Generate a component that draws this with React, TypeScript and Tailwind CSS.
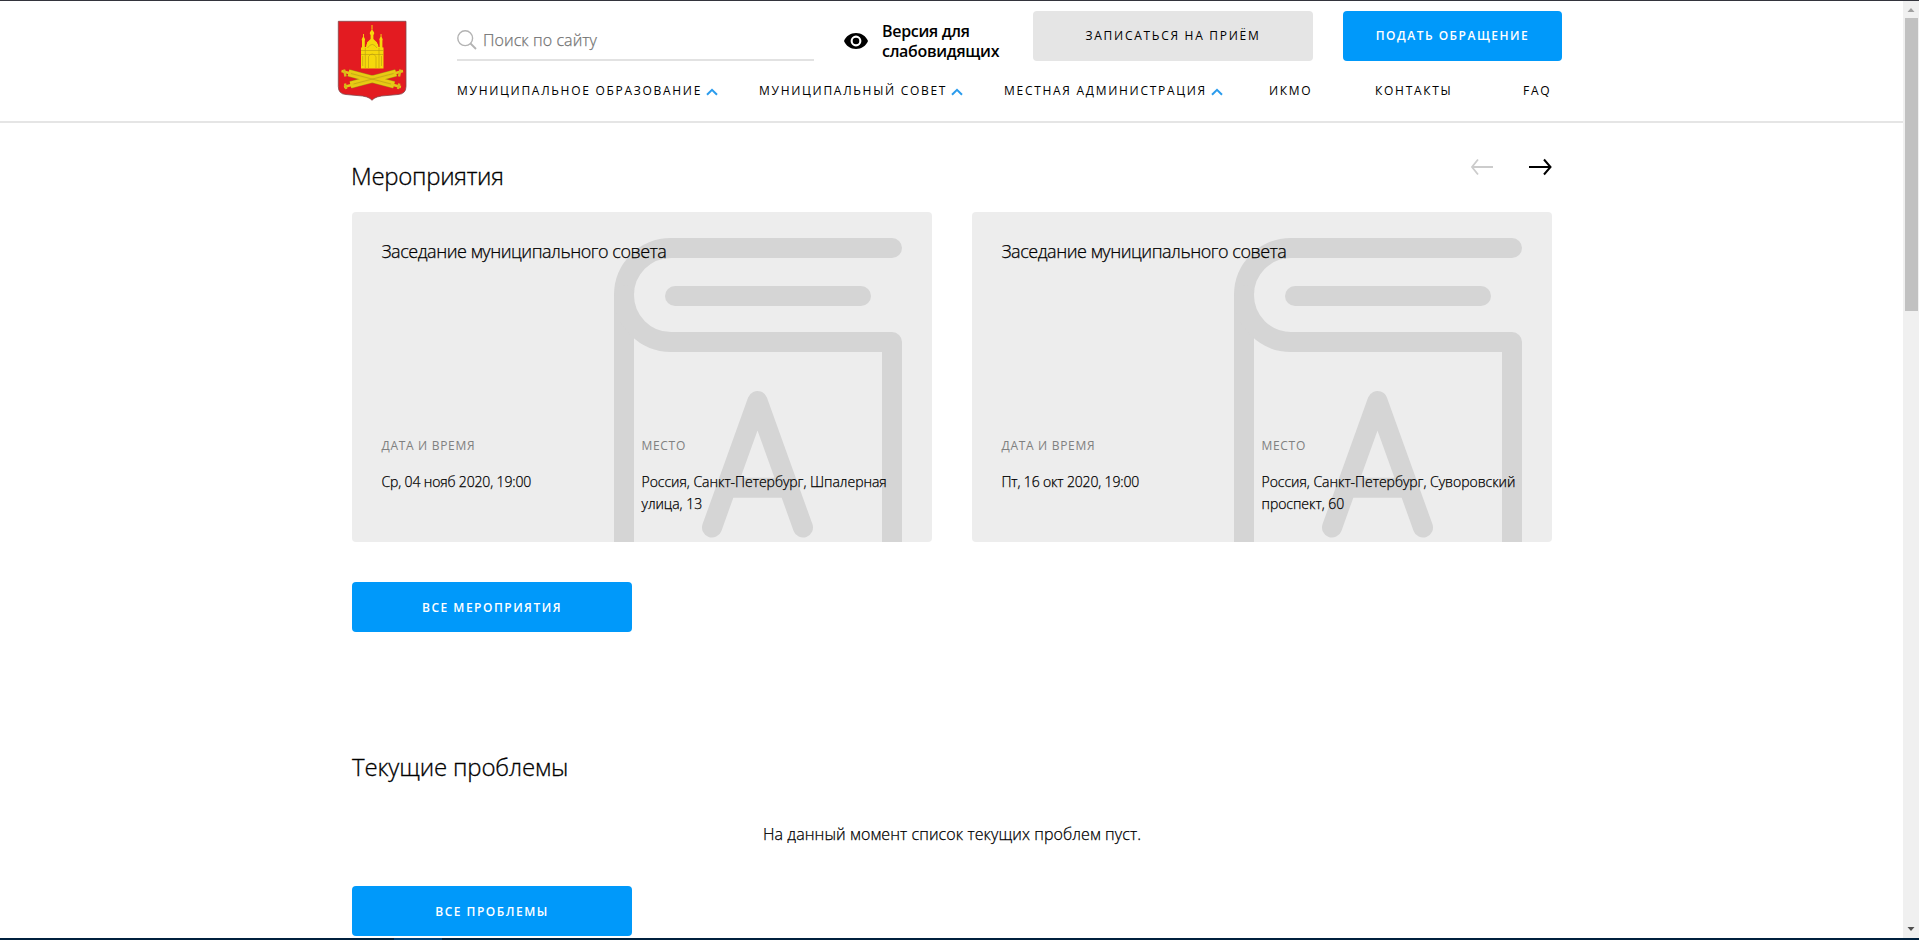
import React from "react";

function Emblem() {
  return (
    <svg width="70" height="82" viewBox="0 0 70 82" className="block">
      <path
        d="M1.3 1.3H69V66.5Q69 74 61 74.5L50 75.5Q38 76 35 80.3Q32 76 20 75.5L9 74.5Q1.3 74 1.3 66.5Z"
        fill="#e31b21"
        stroke="#84474c"
        strokeWidth="0.8"
      />
      <g fill="#f6d80c">
        <path d="M34.5 5h1v4h-1zM26 14h.9v4H26zM43.6 14h.9v4h-.9z" />
        <path d="M35 8.5Q35.6 10.8 37 12Q37.7 13.8 36.4 15V19L40 22.5V25H30V22.5L33.6 19V15Q32.3 13.8 33 12Q34.4 10.8 35 8.5Z" />
        <path d="M26.4 16.6Q28.8 19.3 27.8 20.8V28H25V20.8Q24 19.3 26.4 16.6ZM44 16.6Q46.4 19.3 45.4 20.8V28H42.6V20.8Q41.6 19.3 44 16.6Z" />
        <path d="M29 27Q29.5 21 35.2 20.5Q41 21 41.5 27L46.5 27.5V48.5H24V27.5Z" />
      </g>
      <g fill="none" stroke="#b89c12" strokeWidth="0.6">
        <path d="M24 30.5H46.5M24 34.5H46.5M28.3 28V48M42 28V48M31.5 48V36.5Q35.2 31.5 39 36.5V48M30.5 28Q35.2 20.8 40 28M25.7 36V46M44.5 36V46" />
      </g>
      <g>
        <path d="M11.5 52.8L57 64.8M59 52.8L13.5 64.8" stroke="#a88d16" strokeWidth="7.6" />
        <path d="M11.5 52.8L57 64.8M59 52.8L13.5 64.8" stroke="#e9cb13" strokeWidth="6.4" />
        <path d="M4.5 51L64 67M66 51L7 67" stroke="#e4c616" strokeWidth="2.4" />
        <path d="M7 49.5L8.5 56.5M63.5 49.5L62 56.5M8 63.5L9.2 69M62.3 63.5L61 69" stroke="#d8b919" strokeWidth="2.4" />
        <path d="M14 53.5L54 64M56.5 53.5L16.5 64" stroke="#bda015" strokeWidth="0.7" />
      </g>
    </svg>
  );
}

function Chevron() {
  return (
    <svg width="12" height="8" viewBox="0 0 12 8" className="mt-[2px] block">
      <path d="M1 6.8L6 1.8L11 6.8" fill="none" stroke="#2b9ced" strokeWidth="2" />
    </svg>
  );
}

function BookArt() {
  return (
    <svg width="580" height="330" viewBox="0 0 580 330" className="absolute inset-0">
      <g fill="none" stroke="#d5d5d5" strokeWidth="20" strokeLinecap="round" strokeLinejoin="round">
        <path d="M540 36H319A47 47 0 0 0 272 83V345" />
        <path d="M272 83A47 47 0 0 0 319 130H540V345" />
        <path d="M323 84H509" />
        <path d="M360 315.5L405.5 189L451 315.5M375 275.7H436" />
      </g>
    </svg>
  );
}

type EventInfo = { date: string; place: string };

const events: EventInfo[] = [
  { date: "Ср, 04 нояб 2020, 19:00", place: "Россия, Санкт-Петербург, Шпалерная улица, 13" },
  { date: "Пт, 16 окт 2020, 19:00", place: "Россия, Санкт-Петербург, Суворовский проспект, 60" },
];

function EventField({ label, value, className }: { label: string; value: string; className: string }) {
  return (
    <div>
      <div className="text-[12px] leading-[18px] tracking-[0.7px] text-[#808080]">{label}</div>
      <div className={`mt-[16px] text-[14px] leading-[22px] font-light [-webkit-text-stroke:0.25px] ${className}`}>
        {value}
      </div>
    </div>
  );
}

function EventCard({ date, place }: EventInfo) {
  return (
    <article className="relative h-[330px] w-[580px] overflow-hidden rounded bg-[#ededed]">
      <BookArt />
      <div className="relative flex h-full flex-col justify-between px-[29.5px] pt-[26px] pb-[26px]">
        <h3 className="text-[18px] leading-[27px] font-light tracking-[-0.46px] [-webkit-text-stroke:0.25px]">
          Заседание муниципального совета
        </h3>
        <div className="grid h-[79px] grid-cols-[260px_260px]">
          <EventField label="ДАТА И ВРЕМЯ" value={date} className="tracking-[-0.15px]" />
          <EventField label="МЕСТО" value={place} className="tracking-[-0.03px]" />
        </div>
      </div>
    </article>
  );
}

function BlueButton({ children, className }: { children: React.ReactNode; className: string }) {
  return (
    <button
      className={`flex h-[50px] items-center justify-center rounded bg-[#0099fa] text-[12px] leading-[18px] font-semibold tracking-[1.5px] text-white ${className}`}
    >
      {children}
    </button>
  );
}

function Header() {
  return (
    <header className="h-[123px] border-t border-b-2 border-t-[#33343c] border-b-[#e5e5e5] bg-white">
      <div className="ml-[337px] flex">
        <div className="mt-[19px] w-[120px]">
          <Emblem />
        </div>
        <div className="w-[1105px]">
          <div className="mt-[10px] flex h-[50px]">
            <label className="flex h-[50px] w-[357px] border-b-2 border-[#e2e2e2] pt-[18px]">
              <svg width="20" height="20" viewBox="0 0 20 20" className="mt-px block">
                <circle cx="8.2" cy="8.2" r="7.4" fill="none" stroke="#b3b3b3" strokeWidth="1.4" />
                <path d="M13.5 13.5L19 19" stroke="#b3b3b3" strokeWidth="1.8" />
              </svg>
              <span className="ml-[6px] text-[16px] leading-[22px] font-light tracking-[0.08px] text-[#757575] [-webkit-text-stroke:0.25px]">
                Поиск по сайту
              </span>
            </label>
            <a className="ml-[30px] flex items-start">
              <svg width="24" height="16" viewBox="0 0 24 16" className="mt-[22px] block">
                <path
                  fillRule="evenodd"
                  d="M12 0C6.5 0 2 3.2 0 8C2 12.8 6.5 16 12 16S22 12.8 24 8C22 3.2 17.5 0 12 0ZM12 13.4A5.4 5.4 0 1 1 12 2.6A5.4 5.4 0 0 1 12 13.4ZM12 4.7A3.3 3.3 0 1 0 12 11.3A3.3 3.3 0 0 0 12 4.7Z"
                />
              </svg>
              <span className="mt-[10px] ml-[14px] w-[151px] text-[16px] leading-[20px] font-semibold tracking-[-0.3px]">
                Версия для
                <br />
                слабовидящих
              </span>
            </a>
            <button className="flex h-[50px] w-[280px] items-center justify-center rounded bg-[#e5e5e5] text-[12px] leading-[18px] tracking-[1.72px]">
              ЗАПИСАТЬСЯ НА ПРИЁМ
            </button>
            <BlueButton className="ml-[30px] w-[219px]">ПОДАТЬ ОБРАЩЕНИЕ</BlueButton>
          </div>
          <nav className="mt-[21px] flex text-[12px] leading-[18px] tracking-[1.71px] whitespace-nowrap">
            <a className="flex w-[302px] items-center gap-[4px]">МУНИЦИПАЛЬНОЕ ОБРАЗОВАНИЕ<Chevron /></a>
            <a className="flex w-[245px] items-center gap-[4px]">МУНИЦИПАЛЬНЫЙ СОВЕТ<Chevron /></a>
            <a className="flex w-[265px] items-center gap-[4px]">МЕСТНАЯ АДМИНИСТРАЦИЯ<Chevron /></a>
            <a className="w-[106px]">ИКМО</a>
            <a className="w-[148px]">КОНТАКТЫ</a>
            <a>FAQ</a>
          </nav>
        </div>
      </div>
    </header>
  );
}

export default function App() {
  return (
    <div className="flex h-[940px] w-[1919px] flex-col overflow-hidden bg-white font-['Open_Sans','Noto_Sans',sans-serif] text-black">
      <div className="flex h-[938px]">
        <div className="w-[1903px]">
          <Header />
          <main className="ml-[352px] w-[1200px]">
            <div className="flex h-[89px] justify-between">
              <h2 className="-ml-px pt-[36px] text-[24px] leading-[34px] font-light tracking-[-0.3px] [-webkit-text-stroke:0.3px]">
                Мероприятия
              </h2>
              <div className="flex gap-[36px] pt-[35px]">
                <svg width="23" height="18" viewBox="0 0 23 18">
                  <path d="M23 9H2M8 1.5L2 9L8 16.5" fill="none" stroke="#cccccc" strokeWidth="1.8" />
                </svg>
                <svg width="23" height="18" viewBox="0 0 23 18">
                  <path d="M0 9H21.5M15 1.5L21.5 9L15 16.5" fill="none" stroke="#000" strokeWidth="2" />
                </svg>
              </div>
            </div>
            <div className="flex gap-10">
              {events.map((event) => (
                <EventCard key={event.date} {...event} />
              ))}
            </div>
            <BlueButton className="mt-10 w-[280px] pt-[2px]">ВСЕ МЕРОПРИЯТИЯ</BlueButton>
            <h2 className="mt-[118px] text-[24px] leading-[34px] font-light tracking-[-0.15px] [-webkit-text-stroke:0.3px]">
              Текущие проблемы
            </h2>
            <p className="mt-[38px] text-center text-[16px] leading-[24px] font-light tracking-[0.09px] [-webkit-text-stroke:0.25px]">
              На данный момент список текущих проблем пуст.
            </p>
            <BlueButton className="mt-[40px] w-[280px] pt-[2px]">ВСЕ ПРОБЛЕМЫ</BlueButton>
          </main>
        </div>
        <div className="flex w-[16px] flex-col items-center border-t border-[#33343c] bg-[#f0f0f0]">
          <svg width="16" height="17" viewBox="0 0 16 17">
            <path d="M4.5 11H11.5L8 7Z" fill="#a0a0a0" />
          </svg>
          <div className="h-[293px] w-[13px] bg-[#c1c1c1]" />
          <svg width="16" height="17" viewBox="0 0 16 17" className="mt-auto">
            <path d="M4.5 6H11.5L8 10Z" fill="#505050" />
          </svg>
        </div>
      </div>
      <div className="h-[2px] bg-[#00203d] pl-[394px]">
        <div className="h-full w-[48px] bg-[#003f75]" />
      </div>
    </div>
  );
}
